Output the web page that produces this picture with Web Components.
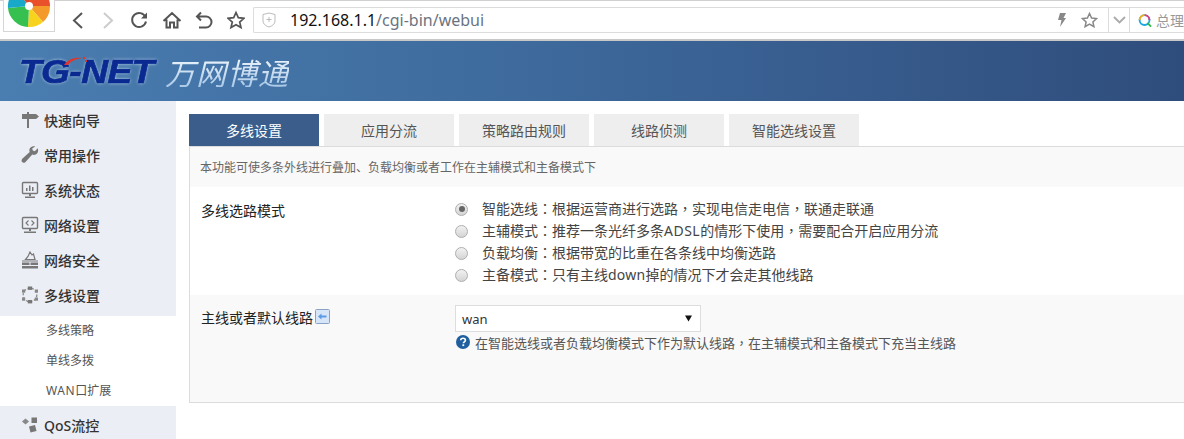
<!DOCTYPE html>
<html lang="zh">
<head>
<meta charset="utf-8">
<title>webui</title>
<style>
  html, body { margin: 0; height: 100%; overflow: hidden; background: #fff; }
  body { width: 1184px; height: 439px; font-family: "Liberation Sans", "Noto Sans CJK SC", sans-serif; }
</style>
</head>
<body>
<browser-bar url-host="192.168.1.1" url-path="/cgi-bin/webui"></browser-bar>
<brand-header></brand-header>
<main-layout>
  <side-nav slot="nav">
    <nav-item icon="sign">快速向导</nav-item>
    <nav-item icon="wrench">常用操作</nav-item>
    <nav-item icon="chart">系统状态</nav-item>
    <nav-item icon="code">网络设置</nav-item>
    <nav-item icon="fire">网络安全</nav-item>
    <nav-item icon="ring" open>多线设置</nav-item>
    <sub-item>多线策略</sub-item>
    <sub-item>单线多拨</sub-item>
    <sub-item><span style="letter-spacing:.6px">WAN</span>口扩展</sub-item>
    <nav-item icon="cubes" open>QoS流控</nav-item>
  </side-nav>
  <div slot="content">
    <tab-strip>
      <tab-item active>多线设置</tab-item>
      <tab-item>应用分流</tab-item>
      <tab-item>策略路由规则</tab-item>
      <tab-item>线路侦测</tab-item>
      <tab-item>智能选线设置</tab-item>
    </tab-strip>
    <settings-panel note="本功能可使多条外线进行叠加、负载均衡或者工作在主辅模式和主备模式下">
      <setting-row label="多线选路模式">
        <radio-option checked>智能选线<span lang="zh-TW">：</span>根据运营商进行选路<span lang="zh-TW">，</span>实现电信走电信<span lang="zh-TW">，</span>联通走联通</radio-option>
        <radio-option>主辅模式<span lang="zh-TW">：</span>推荐一条光纤多条<b style="font-weight:normal;letter-spacing:.5px">ADSL</b>的情形下使用<span lang="zh-TW">，</span>需要配合开启应用分流</radio-option>
        <radio-option>负载均衡<span lang="zh-TW">：</span>根据带宽的比重在各条线中均衡选路</radio-option>
        <radio-option>主备模式<span lang="zh-TW">：</span>只有主线<b style="font-weight:normal;letter-spacing:.25px">down</b>掉的情况下才会走其他线路</radio-option>
      </setting-row>
      <setting-row label="主线或者默认线路" shaded back-icon>
        <select-box value="wan"></select-box>
        <help-note>在智能选线或者负载均衡模式下作为默认线路<span lang="zh-TW">，</span>在主辅模式和主备模式下充当主线路</help-note>
      </setting-row>
    </settings-panel>
  </div>
</main-layout>

<script>
// iconos de la barra del navegador y del menu lateral
const NAV_ICONS = {
  sign: '<path d="M1 3h5V1h2v2h7l3 2.500L15 8H8v9H6V8H1z" fill="#777"/>',
  wrench: '<path d="M16.800 2.200l-3 3-2-.6-.6-2 3-2.200C11.500-.4 8.800 1 8.400 3.500c-.1.900 0 1.700.3 2.400L1.500 12.600c-1 1-1.300 2.500-.4 3.500s2.400.8 3.400-.2l6.800-7.300c.8.300 1.700.4 2.600.2 2.500-.5 3.900-3.500 2.900-6.600z" fill="#777"/>',
  chart: '<rect x="1.500" y="1.500" width="15" height="11" rx="1" fill="none" stroke="#777" stroke-width="1.400"/><path d="M5 10V7h1.500v3zM8 10V4.500h1.500V10zM11 10V6h1.500v4z" fill="#777"/><path d="M8 13h2v2H8zM4 15.500h10V17H4z" fill="#777"/>',
  code: '<rect x="1.500" y="1.500" width="15" height="11" rx="1" fill="none" stroke="#777" stroke-width="1.400"/><path d="M7.500 4.500L5 7l2.500 2.500M10.500 4.500L13 7l-2.500 2.500" fill="none" stroke="#777" stroke-width="1.100"/><path d="M8 13h2v2H8zM3 15.500h12V17H3z" fill="#777"/>',
  fire: '<path d="M9 1l2 3 1.500-1L14 8.500H4.500L7 5.500z" fill="none" stroke="#777" stroke-width="1.200"/><path d="M1 9.500h16v1H1zM1 11.500h7.500v2.500H1zM9.500 11.500H17v2.500H9.500zM1 15h16v2.500H1z" fill="#777"/>',
  ring: '<circle cx="9" cy="9" r="6.800" fill="none" stroke="#888" stroke-width="1.300" stroke-dasharray="2.200 2"/><rect x="6.800" y="0.500" width="4.400" height="3.400" fill="#777"/><rect x="6.800" y="14" width="4.400" height="3.400" fill="#777"/><rect x="1" y="3.500" width="3.200" height="3.200" fill="#888"/><rect x="13.800" y="3.500" width="3.200" height="3.200" fill="#888"/><rect x="1" y="11.500" width="3.200" height="3.200" fill="#888"/><rect x="13.800" y="11.500" width="3.200" height="3.200" fill="#888"/>',
  cubes: '<path d="M4.500 2.500l3.500 3-3.500 3-3.500-3z" fill="#888"/><rect x="10.500" y="1.500" width="5.500" height="5.500" fill="#777"/><path d="M8 10.500l6-1.500 1.500 6-6 1.500z" fill="#777"/>'
};

const define = (name, css, html) => {
  customElements.define(name, class extends HTMLElement {
    constructor() {
      super();
      this.attachShadow({ mode: 'open' });
    }
    connectedCallback() {
      const body = typeof html === 'function' ? html(this) : html;
      this.shadowRoot.innerHTML = `<style>${css}</style>${body}`;
    }
  });
};

define('browser-bar', `
  :host { display: flex; align-items: flex-start; box-sizing: border-box; height: 41px; background: #fff; border-bottom: 2px solid #c8c8c8; box-shadow: inset 0 1px 0 #d0d0d0; }
  .tile { box-sizing: border-box; width: 52px; height: 32px; margin-left: 3px; background: #fff; border: 1px solid #d6d6d6; border-top: 0; overflow: hidden; flex: none; }
  .tool { flex: none; height: 24px; margin-top: 8px; display: flex; }
  .addr { flex: 1; display: flex; align-items: center; box-sizing: border-box; height: 26px; margin: 7px 0 0 8px; border: 1px solid #dcdcdc; border-right: 0; border-radius: 2px 0 0 2px; }
  .shield { margin-left: 8px; flex: none; }
  .url { margin-left: 14px; font: 16px "Noto Sans", sans-serif; color: #6a7480; flex: 1; white-space: nowrap; }
  .url b { font-weight: normal; color: #111; }
  .cell { display: flex; align-items: center; justify-content: center; height: 100%; flex: none; }
  .sep { border-left: 1px solid #dcdcdc; width: 20px; }
  .search { border-left: 1px solid #dcdcdc; width: 55px; justify-content: flex-start; padding-left: 8px; box-sizing: border-box; overflow: hidden; }
  .search span { margin-left: 4px; font: 14px "Noto Sans CJK SC", sans-serif; color: #999; white-space: nowrap; }
`, el => `
  <div class="tile"><svg width="50" height="31" viewBox="0 0 50 31">
    <path d="M25 6L25-15A21 21 0 0 1 46 6z" fill="#ea4f2c"/>
    <path d="M25 6H46A21 21 0 0 1 39 22z" fill="#f39a2a"/>
    <path d="M25 6L39 22A21 21 0 0 1 24 27z" fill="#f7d31e"/>
    <path d="M25 6L24 27A21 21 0 0 1 4 8z" fill="#35c04f"/>
    <path d="M25 6L4 8A21 21 0 0 1 12-10z" fill="#18a9c9"/>
    <path d="M25 6L12-10 25-15z" fill="#d8482f"/>
    <circle cx="25" cy="6" r="4" fill="#fff"/>
  </svg></div>
  <div class="tool" style="margin-left:15px;width:16px"><svg width="16" height="24" viewBox="0 0 16 24"><path d="M12 5L4 12.500 12 20" fill="none" stroke="#555" stroke-width="2"/></svg></div>
  <div class="tool" style="margin-left:14px;width:16px"><svg width="16" height="24" viewBox="0 0 16 24"><path d="M4 5l8 7.500L4 20" fill="none" stroke="#ccc" stroke-width="2"/></svg></div>
  <div class="tool" style="margin-left:14px;width:18px"><svg width="18" height="24" viewBox="0 0 18 24"><path d="M15.500 9A7 7 0 1 0 16 13.500" fill="none" stroke="#555" stroke-width="2"/><path d="M17 4.500V10.500H11z" fill="#555"/></svg></div>
  <div class="tool" style="margin-left:14px;width:20px"><svg width="20" height="24" viewBox="0 0 20 24"><path d="M1.500 13L10 5l8.500 8M4.500 11.500V19.500H8v-5h4v5h3.500V11.500" fill="none" stroke="#555" stroke-width="2"/></svg></div>
  <div class="tool" style="margin-left:13px;width:18px"><svg width="18" height="24" viewBox="0 0 18 24"><path d="M6 4.500L2 8.500l4 4M2.500 8.500H11a5.500 5.500 0 0 1 0 11H4" fill="none" stroke="#555" stroke-width="2"/></svg></div>
  <div class="tool" style="margin-left:14px;width:18px"><svg width="18" height="24" viewBox="0 0 18 24"><path d="M9 4.500l2.300 5.200 5.700.6-4.300 3.700 1.300 5.500L9 16.700 4 19.500l1.300-5.500L1 10.300l5.700-.6z" fill="none" stroke="#555" stroke-width="1.700"/></svg></div>
  <div class="addr">
    <svg class="shield" width="14" height="16" viewBox="0 0 14 16"><path d="M1 2.500L7 1l6 1.500V9c0 3-3 5-6 6-3-1-6-3-6-6z" fill="#fff" stroke="#bbb"/><path d="M7 5v5M4.500 7.500h5" stroke="#bbb"/></svg>
    <div class="url"><b>${el.getAttribute('url-host')}</b>${el.getAttribute('url-path')}</div>
    <div class="cell" style="width:24px"><svg width="10" height="14" viewBox="0 0 10 14"><path d="M3 0h6L6.500 5H9L3 14l1.500-7H1z" fill="#888"/></svg></div>
    <div class="cell" style="width:30px;margin-right:4px"><svg width="17" height="16" viewBox="0 0 17 16"><path d="M8.500 1.500l2.100 4.500 4.900.6-3.600 3.300 1 4.800-4.400-2.500-4.400 2.500 1-4.800L1.500 6.600l4.900-.6z" fill="none" stroke="#888" stroke-width="1.500"/></svg></div>
    <div class="cell sep"><svg width="13" height="8" viewBox="0 0 13 8"><path d="M1 1l5.500 5.500L12 1" fill="none" stroke="#aaa" stroke-width="1.800"/></svg></div>
    <div class="cell search"><svg width="15" height="15" viewBox="0 0 15 15"><circle cx="7" cy="7" r="5.300" fill="none" stroke="#1aa7e0" stroke-width="2"/><path d="M7 1.700a5.300 5.300 0 0 1 5.300 5.300" fill="none" stroke="#e6397f" stroke-width="2"/><path d="M1.700 7A5.300 5.300 0 0 1 7 1.700" fill="none" stroke="#f2b01e" stroke-width="2"/><path d="M10 10l4 4" stroke="#2db84d" stroke-width="2"/></svg><span>总理</span></div>
  </div>
`);

define('brand-header', `
  :host { display: flex; align-items: center; box-sizing: border-box; height: 60px; padding: 0 0 0 19px; background: linear-gradient(90deg, #4a7db0 0%, #3f6c9f 40%, #2f4d7c 100%); }
  .logo { position: relative; display: inline-block; width: 136px; height: 30px; flex: none; }
  .mark { display: inline-block; transform: scaleX(1.09); transform-origin: left center; font: italic bold 34px/30px "Liberation Sans", sans-serif; letter-spacing: -0.5px; color: #0a2a92; -webkit-text-stroke: 0.7px #0a2a92; text-shadow: 0 0 3px #d6e8f6; white-space: nowrap; }
  .swoosh { position: absolute; left: 43px; top: 0; }
  .name { margin-left: 10px; padding-top: 1px; font: italic 30px/1 "Noto Sans CJK SC", sans-serif; letter-spacing: 1px; background: linear-gradient(#f2f7fc, #a9c9e8); -webkit-background-clip: text; background-clip: text; color: transparent; white-space: nowrap; }
`, `<span class="logo"><span class="mark">TG-NET</span><svg class="swoosh" width="26" height="10" viewBox="0 0 26 10"><path d="M2 9C6 3 13 1 20 2 14 3 9 5 6 9z" fill="#e0352b"/><rect x="21" y="1" width="2" height="2" fill="#e0352b"/><rect x="23" y="4" width="2" height="2" fill="#e0352b"/></svg></span><span class="name">万网博通</span>`);

define('main-layout', `
  :host { display: grid; grid-template-columns: 176px 1fr; column-gap: 13px; height: 338px; overflow: hidden; }
`, `<slot name="nav"></slot><slot name="content"></slot>`);

define('side-nav', `
  :host { display: block; }
`, `<slot></slot>`);

define('nav-item', `
  :host { display: flex; align-items: center; box-sizing: border-box; height: 35px; padding: 3px 0 0 21px; background: #ebeef4; font: 500 14px "Noto Sans", "Noto Sans CJK SC", sans-serif; color: #333; }
  :host([open]) { height: 40px; padding: 0 0 2px 21px; }
  svg { flex: none; margin-right: 5px; }
`, el => `<svg width="18" height="18" viewBox="0 0 18 18">${NAV_ICONS[el.getAttribute('icon')]}</svg><slot></slot>`);

define('sub-item', `
  :host { display: flex; align-items: center; box-sizing: border-box; height: 30px; padding: 0 0 2px 46px; background: #fff; font: 12px "Noto Sans", "Noto Sans CJK SC", sans-serif; color: #555; }
`, `<div><slot></slot></div>`);

define('tab-strip', `
  :host { display: flex; gap: 5px; padding-top: 13px; }
`, `<slot></slot>`);

define('tab-item', `
  :host { box-sizing: border-box; width: 130px; height: 32px; display: flex; align-items: center; justify-content: center; background: #eeeeee; font: 14px "Noto Sans CJK SC", sans-serif; color: #555; }
  :host([active]) { background: #3a5d8c; color: #fff; }
`, `<slot></slot>`);

define('settings-panel', `
  :host { display: block; box-sizing: border-box; width: 1000px; border: 1px solid #dcdcdc; border-width: 1px 0 1px 1px; }
  .note { box-sizing: border-box; height: 40px; padding: 0 0 2px 10px; display: flex; align-items: center; background: #f9f9f9; font: 12px "Noto Sans CJK SC", sans-serif; color: #666; }
`, el => `<div class="note">${el.getAttribute('note')}</div><slot></slot>`);

define('setting-row', `
  :host { display: grid; grid-template-columns: 265px 1fr; box-sizing: border-box; height: 108px; padding-top: 11px; background: #fff; font: 14px "Noto Sans", "Noto Sans CJK SC", sans-serif; color: #333; }
  :host([shaded]) { background: #f9f9f9; height: 107px; padding-top: 10px; }
  .label { padding: 2px 0 0 11px; line-height: 22px; display: flex; align-items: flex-start; color: #222; }
  .label svg { margin: 2px 0 0 2px; }
`, el => `
  <div class="label">${el.getAttribute('label')}${el.hasAttribute('back-icon') ? `<svg width="15" height="15" viewBox="0 0 15 15"><rect x=".5" y=".5" width="14" height="14" rx="1" fill="#d6e6f8" stroke="#8aa3c4"/><path d="M3 7.500L6.500 4.500v2h5v2h-5v2z" fill="#5b9be6"/></svg>` : ''}</div>
  <div><slot></slot></div>
`);

define('radio-option', `
  :host { display: flex; align-items: center; height: 22px; white-space: nowrap; color: #444; }
  ::slotted(span) { font-family: "Noto Sans CJK TC", sans-serif; }
  .text { margin-bottom: 3px; }
  .dot { box-sizing: border-box; width: 13px; height: 13px; margin-right: 14px; border-radius: 50%; border: 1px solid #aeaeae; background: linear-gradient(#f2f2f2, #d4d4d4); display: flex; align-items: center; justify-content: center; flex: none; }
  .dot i { width: 6px; height: 6px; border-radius: 50%; background: #666; }
`, el => `<span class="dot">${el.hasAttribute('checked') ? '<i></i>' : ''}</span><div class="text"><slot></slot></div>`);

define('select-box', `
  :host { display: flex; align-items: center; justify-content: space-between; box-sizing: border-box; width: 246px; height: 27px; padding: 0 8px 0 6px; background: #fff; border: 1px solid #ddd; font: 13px "Noto Sans", sans-serif; color: #333; }
  svg { flex: none; }
`, el => `<span>${el.getAttribute('value')}</span><svg width="7" height="7" viewBox="0 0 7 7"><path d="M0 .5h7L3.500 6.500z" fill="#111"/></svg>`);

define('help-note', `
  :host { display: flex; align-items: center; gap: 5px; height: 22px; margin-top: -1px; font: 13px "Noto Sans CJK SC", sans-serif; color: #555; white-space: nowrap; }
  ::slotted(span) { font-family: "Noto Sans CJK TC", sans-serif; }
  svg { flex: none; margin-left: 1px; }
`, `<svg width="14" height="14" viewBox="0 0 14 14"><circle cx="7" cy="7" r="7" fill="#1f5f9f"/><path d="M4.700 5.300C4.800 3.900 5.800 3.200 7 3.200c1.400 0 2.400.8 2.400 2 0 1.700-2 1.700-2 3.100" fill="none" stroke="#fff" stroke-width="1.600"/><rect x="6.400" y="9.300" width="1.800" height="1.800" fill="#fff"/></svg><div><slot></slot></div>`);
</script>
</body>
</html>
